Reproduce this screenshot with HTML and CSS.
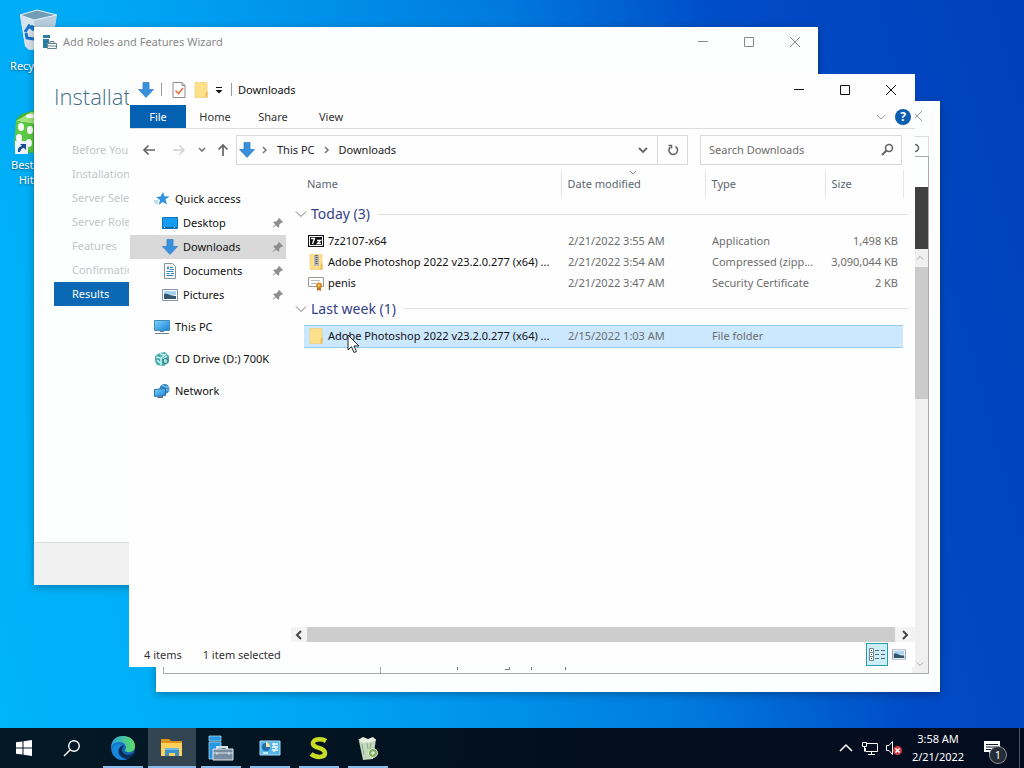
FILE: index.html
```html
<!DOCTYPE html>
<html lang="en">
<head>
<meta charset="UTF-8">
<meta name="viewport" content="width=device-width, initial-scale=1.0">
<title>Downloads</title>
<link rel="stylesheet" href="styles.css">
</head>
<body>

<!-- shared icons -->
<svg class="defs" aria-hidden="true">
    <defs>
        <linearGradient id="blue" x1="0" y1="0" x2="1" y2="1"><stop offset="0" stop-color="#7fd3fb"/><stop offset="1" stop-color="#1684d8"/></linearGradient>
        <linearGradient id="edgeTop" x1="0" y1="0" x2="1" y2="0"><stop offset="0" stop-color="#2ba7e0"/><stop offset="1" stop-color="#5fdc62"/></linearGradient>
        <linearGradient id="edgeBody" x1="0" y1="0" x2="1" y2="1"><stop offset="0" stop-color="#1687d9"/><stop offset="1" stop-color="#0d4fa0"/></linearGradient>
        <symbol id="down" viewBox="0 0 16 16"><path d="M5 0.500h6v7h4.500L8 15.500.500 7.500H5z" fill="#3990dc" stroke="#2b7ac6" stroke-width=".7"/></symbol>
        <symbol id="folder" viewBox="0 0 16 16"><path d="M2 .500h12v15H2z" fill="#ffe08a" stroke="#efcf76" stroke-width=".7"/><path d="M12.500 11l2-2v6.500h-2z" fill="#e8bd51"/></symbol>
        <symbol id="pin" viewBox="0 0 12 12"><path d="M7 1l4 4-1 1-.8-.3-2 2 .1 2-1 1L4 8.500 1 11l-.3-.3L3.300 7.500 1.300 5.500l1-1 2 .1 2-2L6 2z" fill="#8d8d8d"/></symbol>
        <symbol id="chev" viewBox="0 0 12 12"><path d="M1 3.500l5 5 5-5" fill="none" stroke="currentColor"/></symbol>
        <symbol id="min" viewBox="0 0 12 12"><path d="M1 5.500h10" stroke="currentColor"/></symbol>
        <symbol id="max" viewBox="0 0 12 12"><path d="M1.500 1.500h9v9h-9z" fill="none" stroke="currentColor"/></symbol>
        <symbol id="close" viewBox="0 0 12 12"><path d="M1 1l10 10M11 1L1 11" stroke="currentColor"/></symbol>
        <symbol id="lens" viewBox="0 0 13 13"><circle cx="8" cy="5" r="3.500" fill="none" stroke="#666" stroke-width="1.600"/><path d="M5.500 7.500L1 12" stroke="#666" stroke-width="2"/></symbol>
        <symbol id="picture" viewBox="0 0 16 12"><path d="M.500.500h15v11H.500z" fill="#fff" stroke="#8794a4"/><path d="M2 2h12v4H2z" fill="#a8d4f2"/><path d="M2 5c4-1 5 2 12 2v3H2z" fill="#32566f"/></symbol>
    </defs>
</svg>

<main class="desktop">
    <div class="shortcut bin">
        <svg width="44" height="44" viewBox="0 0 44 44"><path d="M3 7l17-5 20 5-5 32-23 3-4-4z" fill="#b9cfe0"/><path d="M3 7l17-5 20 5-23 5z" fill="#719eb7" stroke="#e6f0f6"/><path d="M3 7l14 5 2 29-7 1-4-4z" fill="#d8e4ed"/><path d="M8 24l4-6 5 4M17 31l-7-1-1-5M14 18l5 3" fill="none" stroke="#1573ca" stroke-width="3"/></svg>
        <span>Recycle Bin</span>
    </div>
    <div class="shortcut dice">
        <svg width="48" height="48" viewBox="0 0 48 48"><path d="M5 12Q6 8 11 5L24 1l23 7v35l-28 1-15-6z" fill="#43b332"/><path d="M5 12L20 3l24 4-20 8z" fill="#a3e77c"/><path d="M5 12l17 3v29L3 37z" fill="#5ac943"/><g fill="#fff"><ellipse cx="10" cy="18" rx="3" ry="4"/><ellipse cx="19" cy="21" rx="3" ry="4"/><ellipse cx="8" cy="29" rx="3" ry="4"/><ellipse cx="18" cy="34" rx="3" ry="4"/><ellipse cx="19" cy="7" rx="4" ry="2"/></g><path d="M4 32h13v13H4z" fill="#eef4fb"/><path d="M7 43q-1-5 4-6l-2-2h6v6l-2-2q-3 0-4 4z" fill="#174c91"/></svg>
        <span>Best<br>Hit</span>
    </div>

    <!-- server manager, behind -->
    <section class="window manager" aria-label="Server Manager">
        <header class="titlebar"><button aria-label="Close"><svg width="12" height="12"><use href="#close"/></svg></button></header>
        <div class="manager-box">
            <div class="manager-field"><svg width="13" height="13"><use href="#lens"/></svg></div>
            <div class="manager-page">
                <div class="manager-nav"></div>
                <div class="manager-main"><svg width="120" height="6" viewBox="0 0 120 6"><path d="M1.500 0v3M49 2.500h4.500V0M75.500 0v3M109.500 0v3" fill="none" stroke="#777"/></svg></div>
                <div class="vscroll">
                    <div class="dark"></div>
                    <button aria-label="Up"><svg class="flip" width="8" height="8"><use href="#chev"/></svg></button>
                    <div class="vthumb"></div>
                    <button class="last" aria-label="Down"><svg width="8" height="8"><use href="#chev"/></svg></button>
                </div>
            </div>
        </div>
    </section>

    <!-- wizard -->
    <section class="window wizard" aria-label="Add Roles and Features Wizard">
        <header class="titlebar">
            <svg width="16" height="16" viewBox="0 0 16 16"><path d="M1 1h7v3H1zM1 5h6v9H1z" fill="#2b7e9e"/><path d="M1 4.500h7" stroke="#fff"/><path d="M5 9h10v6H5z" fill="#fff"/><path d="M5.500 9.500h9v5h-9zM8 9V7.500h4V9M5 12h10" fill="none" stroke="#60818e"/></svg>
            <span class="title">Add Roles and Features Wizard</span>
            <button aria-label="Minimize"><svg width="12" height="12"><use href="#min"/></svg></button>
            <button aria-label="Maximize"><svg width="12" height="12"><use href="#max"/></svg></button>
            <button aria-label="Close"><svg width="12" height="12"><use href="#close"/></svg></button>
        </header>
        <h1>Installation progress</h1>
        <ol class="steps">
            <li>Before You Begin</li>
            <li>Installation Type</li>
            <li>Server Selection</li>
            <li>Server Roles</li>
            <li>Features</li>
            <li>Confirmation</li>
            <li class="current">Results</li>
        </ol>
        <footer></footer>
    </section>

    <!-- file explorer -->
    <section class="window explorer" aria-label="Downloads">
        <header class="titlebar">
            <svg width="16" height="16"><use href="#down"/></svg>
            <i class="bar"></i>
            <button class="quick" aria-label="Properties"><svg width="14" height="16" viewBox="0 0 14 16"><path d="M1 .500h9l3 3v12H1z" fill="#fff" stroke="#8a8a8a"/><path d="M10 .500v3h3" fill="none" stroke="#8a8a8a"/><path d="M3.500 8.500l3 3L11 6" fill="none" stroke="#e0714c" stroke-width="1.600"/></svg></button>
            <button class="quick" aria-label="New folder"><svg width="16" height="16"><use href="#folder"/></svg></button>
            <button class="quick small" aria-label="Customize toolbar"><svg width="8" height="8" viewBox="0 0 8 8"><path d="M1 1.500h6" stroke="#111"/><path d="M.500 4h7L4 7.500z" fill="#111"/></svg></button>
            <i class="bar"></i>
            <span class="title">Downloads</span>
            <button aria-label="Minimize"><svg width="12" height="12"><use href="#min"/></svg></button>
            <button aria-label="Maximize"><svg width="12" height="12"><use href="#max"/></svg></button>
            <button aria-label="Close"><svg width="12" height="12"><use href="#close"/></svg></button>
        </header>
        <nav class="ribbon">
            <button class="file">File</button>
            <button>Home</button>
            <button>Share</button>
            <button>View</button>
            <button class="expand" aria-label="Expand ribbon"><svg width="10" height="10"><use href="#chev"/></svg></button>
            <button class="help" aria-label="Help">?</button>
        </nav>
        <div class="addressbar">
            <button class="back" aria-label="Back"><svg width="14" height="14" viewBox="0 0 14 14"><path d="M13 7H2M6.500 2.500L2 7l4.500 4.500" fill="none" stroke="#666" stroke-width="1.700"/></svg></button>
            <button class="forward" aria-label="Forward"><svg width="14" height="14" viewBox="0 0 14 14"><path d="M1 7h11M7.500 2.500L12 7l-4.500 4.500" fill="none" stroke="#d2d2d2" stroke-width="1.500"/></svg></button>
            <button class="recent" aria-label="Recent"><svg width="8" height="8" viewBox="0 0 8 8"><path d="M1 2l3 3 3-3" fill="none" stroke="#777" stroke-width="1.600"/></svg></button>
            <button class="up" aria-label="Up"><svg width="14" height="14" viewBox="0 0 14 14"><path d="M7 13V2M2.500 6.500L7 2l4.500 4.500" fill="none" stroke="#666" stroke-width="1.700"/></svg></button>
            <div class="path">
                <svg width="16" height="16"><use href="#down"/></svg>
                <svg class="sep" width="8" height="8" viewBox="0 0 8 8"><path d="M2 1l3 3-3 3" fill="none" stroke="#777" stroke-width="1.500"/></svg>
                <a href="#pc">This PC</a>
                <svg class="sep" width="8" height="8" viewBox="0 0 8 8"><path d="M2 1l3 3-3 3" fill="none" stroke="#777" stroke-width="1.500"/></svg>
                <a href="#downloads">Downloads</a>
                <button class="history" aria-label="Previous locations"><svg width="10" height="10" viewBox="0 0 10 10"><path d="M1 3l4 4 4-4" fill="none" stroke="#666" stroke-width="1.800"/></svg></button>
                <button class="refresh" aria-label="Refresh"><svg width="12" height="12" viewBox="0 0 12 12"><path d="M8.500 2.500A4.300 4.300 0 1 1 3 3.300M1.500 1.500h3v3" fill="none" stroke="#666" stroke-width="1.600"/></svg></button>
            </div>
            <label class="search">
                <input type="search" placeholder="Search Downloads" aria-label="Search Downloads">
                <svg width="13" height="13"><use href="#lens"/></svg>
            </label>
        </div>

        <div class="content">
            <nav class="sidebar">
                <a href="#quick"><svg width="16" height="16" viewBox="0 0 16 16"><path d="M9 1l1.500 4.500 5-.2-4 3.200 1.500 5-4.300-2.500-4 3 1.300-5L2 6l4.500-.5z" fill="#2f92dc"/><path d="M0 10h4M1 12h3" stroke="#72b9e9"/></svg>Quick access</a>
                <a class="sub" href="#desktop"><svg width="16" height="16" viewBox="0 0 16 16"><path d="M.500 2.500h15v11H.500z" fill="#159cf0" stroke="#0872bd"/><path d="M1 12.500h14" stroke="#09629f"/><path d="M2 12.500h1M12 12.500h1" stroke="#fff"/></svg>Desktop<svg class="pin" width="12" height="12"><use href="#pin"/></svg></a>
                <a class="sub selected" href="#downloads"><svg width="16" height="16"><use href="#down"/></svg>Downloads<svg class="pin" width="12" height="12"><use href="#pin"/></svg></a>
                <a class="sub" href="#documents"><svg width="16" height="16" viewBox="0 0 16 16"><path d="M2.500.500h8l3 3v12h-11z" fill="#fff" stroke="#8492a0"/><path d="M5 6.500l1-3 1 3M8 4.500h3M8 6.500h4M4.500 8.500h7M4.500 10.500h3M9 10.500h3M4.500 12.500h7" fill="none" stroke="#3486bd"/></svg>Documents<svg class="pin" width="12" height="12"><use href="#pin"/></svg></a>
                <a class="sub" href="#pictures"><svg width="16" height="12"><use href="#picture"/></svg>Pictures<svg class="pin" width="12" height="12"><use href="#pin"/></svg></a>
                <a class="root" href="#pc"><svg width="16" height="16" viewBox="0 0 16 16"><path d="M.500 1.500h15v10H.500z" fill="url(#blue)" stroke="#438bb3"/><path d="M6 12h4v1H6zM1 14h14v1H1z" fill="#6b8494"/></svg>This PC</a>
                <a class="root" href="#cd"><svg width="16" height="16" viewBox="0 0 16 16"><path d="M1 5l5-3 5-1 4 4v6l-5 4-7-1-2-4z" fill="#45a9ad"/><path d="M2 6l5 1 5-4M7 7v7M3 9l3 3M6 3l5 1M9 8l4-3" fill="none" stroke="#c8f4ed" stroke-width="1.500"/><circle cx="11.500" cy="10" r="2.500" fill="#a8e1df" stroke="#24717b"/></svg>CD Drive (D:) 700K</a>
                <a class="root" href="#network"><svg width="16" height="16" viewBox="0 0 16 16"><circle cx="10.500" cy="6" r="5" fill="#3487cc"/><path d="M8 2q4 3 7 2M7 6q4 1 8 1" stroke="#9bd5f5" fill="none"/><path d="M.500 6.500l11-1v7l-11 1z" fill="url(#blue)" stroke="#2871a8"/><path d="M4 13.500l5-.500v2H3z" fill="#536d81"/></svg>Network</a>
            </nav>
            <div class="files">
                <table>
                    <colgroup><col class="c-gap"><col><col class="c-date"><col class="c-type"><col class="c-size"><col class="c-end"></colgroup>
                    <thead>
                        <tr><td></td><th>Name</th><th class="sorted">Date modified<svg width="8" height="6" viewBox="0 0 8 6"><path d="M1 1l3 3 3-3" fill="none" stroke="#888"/></svg></th><th>Type</th><th>Size</th><th></th></tr>
                    </thead>
                    <tbody>
                        <tr class="group"><th colspan="6"><div><svg width="12" height="12"><use href="#chev"/></svg><span>Today (3)</span><i></i></div></th></tr>
                        <tr>
                            <td></td>
                            <td><div class="name"><svg width="16" height="16" viewBox="0 0 16 16"><path d="M0 2h16v12H0z" fill="#111"/><path d="M1.500 3.500h13v9h-13z" fill="none" stroke="#fff"/><path d="M3 5.500h3.500L4.500 11M9 7.500h3.500L9.500 10.500H13" fill="none" stroke="#fff" stroke-width="1.400"/></svg><span>7z2107-x64</span></div></td>
                            <td>2/21/2022 3:55 AM</td><td>Application</td><td class="size">1,498 KB</td><td></td>
                        </tr>
                        <tr>
                            <td></td>
                            <td><div class="name"><svg width="16" height="16" viewBox="0 0 16 16"><use href="#folder"/><path d="M6 1h5v11H6z" fill="#b9b9b9"/><path d="M8.500 1v10" stroke="#555" stroke-width="2" stroke-dasharray="1 1"/></svg><span>Adobe Photoshop 2022 v23.2.0.277 (x64) ...</span></div></td>
                            <td>2/21/2022 3:54 AM</td><td>Compressed (zipp...</td><td class="size">3,090,044 KB</td><td></td>
                        </tr>
                        <tr>
                            <td></td>
                            <td><div class="name"><svg width="16" height="16" viewBox="0 0 16 16"><path d="M.500 2.500h15v9H.500z" fill="#fff" stroke="#a0968e"/><path d="M3 5.500h9M3 8.500h5" stroke="#bbb"/><path d="M9 11h4v5l-2-1-2 1z" fill="#ba6b27"/><circle cx="11" cy="10.500" r="3" fill="#d88b25"/><circle cx="11" cy="10.500" r="1" fill="#ffe092"/></svg><span>penis</span></div></td>
                            <td>2/21/2022 3:47 AM</td><td>Security Certificate</td><td class="size">2 KB</td><td></td>
                        </tr>
                        <tr class="group"><th colspan="6"><div><svg width="12" height="12"><use href="#chev"/></svg><span>Last week (1)</span><i></i></div></th></tr>
                        <tr class="selected">
                            <td></td>
                            <td><div class="name"><svg width="16" height="16"><use href="#folder"/></svg><span>Adobe Photoshop 2022 v23.2.0.277 (x64) ...</span></div></td>
                            <td>2/15/2022 1:03 AM</td><td>File folder</td><td class="size"></td><td></td>
                        </tr>
                    </tbody>
                </table>
                <div class="hscroll">
                    <button aria-label="Scroll left"><svg width="8" height="10" viewBox="0 0 8 10"><path d="M6 1L2 5l4 4" fill="none" stroke="#444" stroke-width="2"/></svg></button>
                    <div class="hthumb"></div>
                    <button aria-label="Scroll right"><svg width="8" height="10" viewBox="0 0 8 10"><path d="M2 1l4 4-4 4" fill="none" stroke="#444" stroke-width="2"/></svg></button>
                </div>
            </div>
        </div>
        <footer class="status">
            <span>4 items</span><span>1 item selected</span>
            <button class="view on" aria-label="Details"><svg width="18" height="16" viewBox="0 0 18 16"><path d="M1.500 1.500h4v4h-4zM1.500 5.500h4v4h-4zM1.500 9.500h4v4h-4z" fill="#fff" stroke="#718792"/><path d="M3 3.500h1M3 7.500h1M3 11.500h1" stroke="#345"/><path d="M7 3.500h4M13 3.500h4M7 7.500h4M13 7.500h4M7 11.500h4M13 11.500h4" stroke="#54707c"/></svg></button>
            <button class="view" aria-label="Large icons"><svg width="14" height="11" viewBox="0 0 16 12"><use href="#picture"/></svg></button>
        </footer>
    </section>

    <svg class="cursor" width="13" height="20" viewBox="0 0 13 20"><path d="M1 1v15l3.500-3.300L7 18.500l2.500-1L7 12h5z" fill="#fff" stroke="#222"/></svg>
</main>

<footer class="taskbar">
    <button class="task" aria-label="Start"><svg width="16" height="16" viewBox="0 0 16 16"><path d="M0 2.300l6.500-.9v6.100H0zM7.500 1.200L16 0v7.500H7.500zM0 8.500h6.500v6.100L0 13.700zM7.500 8.500H16V16l-8.500-1.200z" fill="#fff"/></svg></button>
    <button class="task" aria-label="Search"><svg width="18" height="18" viewBox="0 0 18 18"><circle cx="11" cy="7" r="5.300" fill="none" stroke="#fff" stroke-width="1.400"/><path d="M7 11l-6 6" stroke="#fff" stroke-width="1.500"/></svg></button>
    <div class="apps">
        <button class="task open" aria-label="Edge"><svg width="26" height="26" viewBox="0 0 26 26"><circle cx="13" cy="13" r="12" fill="url(#edgeBody)"/><path d="M1 12C2 4 7 1 13 1c7 0 12 4 12 10 0 5-4 7-8 6-3-1-2-2-1-4 0-4-3-6-7-6-4 0-7 2-8 5z" fill="url(#edgeTop)"/><path d="M10 12c-4 5 0 11 8 12 3-1 5-3 6-6-4 3-11 3-12-3 0-2 1-3 2-4-1-1-3-1-4 1z" fill="#0d2c55"/><path d="M10 12c-4 5-1 12 7 12-8 3-15-2-15-9 0-4 5-7 11-5-1 0-2 1-3 2z" fill="#1687d9"/></svg></button>
        <button class="task open active" aria-label="File Explorer"><svg width="24" height="24" viewBox="0 0 24 24"><path d="M1 3h8l2 2h11v4H1z" fill="#dd941c"/><path d="M1 7h21v13H1z" fill="#ffd15b"/><path d="M5 20v-8h14v8h-4v-3H9v3z" fill="#3b91cb"/><path d="M5 12h14v2H5z" fill="#6cb8e1"/></svg></button>
        <button class="task open" aria-label="Server Manager"><svg width="26" height="26" viewBox="0 0 26 26"><path d="M1 1h12v5H1zM1 7h12v17H1z" fill="#2397df" stroke="#bce3fa" stroke-width=".7"/><path d="M9 14v-2h10v2" stroke="#d8e1e8" stroke-width="2" fill="none"/><path d="M5 14h20v11H5z" fill="#778ca0" stroke="#e3e9ee"/><path d="M5 18h20M9 17v3M21 17v3" stroke="#dce4ec"/></svg></button>
        <button class="task open" aria-label="Control Panel"><svg width="22" height="18" viewBox="0 0 22 18"><path d="M1 2h20v14H1z" fill="#57b5e8" stroke="#a8dcf6"/><circle cx="7" cy="8" r="4" fill="#216fae"/><path d="M7 8V3a5 5 0 0 1 4 5z" fill="#f7e4a1"/><path d="M13 5h6M13 8h6M13 11h6M4 14h5M15 4v3M17 7v3M15 10v3" stroke="#e9f8ff" stroke-width="1.500"/></svg></button>
        <button class="task open" aria-label="Sublime"><svg width="22" height="24" viewBox="0 0 22 24"><path d="M18 5C13 2 4 3 5 8c1 5 12 3 12 9 0 5-9 5-14 1" fill="none" stroke="#c9dc25" stroke-width="4.500"/></svg></button>
        <button class="task open" aria-label="Uninstaller"><svg width="22" height="24" viewBox="0 0 22 24"><path d="M2 5l17-2-3 20-10 1z" fill="#c5d7bd"/><path d="M1 4l5-3 5 2 5-2 3 3-5 2-7 1z" fill="#e9f0df"/><path d="M5 8l2 11M10 7l1 6M14 7l-1 6" stroke="#8bab82" fill="none"/><circle cx="16" cy="17" r="4.500" fill="#7dae61" stroke="#dceccd"/><path d="M14 17h4M16 15v4" stroke="#fff"/></svg></button>
    </div>
    <div class="tray">
        <button aria-label="Show hidden icons"><svg width="14" height="10" viewBox="0 0 14 10"><path d="M1 8l6-6 6 6" fill="none" stroke="#fff" stroke-width="1.500"/></svg></button>
        <button aria-label="Network"><svg width="18" height="16" viewBox="0 0 18 16"><path d="M6 3.500h10.500v8H4.500V8M10.500 11.500v3M7 14.500h7M1.500 2.500h4v4h-4zM3.500 6.500v5" fill="none" stroke="#fff"/></svg></button>
        <button aria-label="Volume"><svg width="18" height="16" viewBox="0 0 18 16"><path d="M1.500 5.500h2.500l3.500-4v13l-3.500-4H1.500z" fill="none" stroke="#fff"/><circle cx="12.500" cy="10.500" r="4.500" fill="#d43b42"/><path d="M10.500 8.500l4 4M14.500 8.500l-4 4" stroke="#fff" stroke-width="1.500"/></svg></button>
        <button class="clock"><span>3:58 AM</span><span>2/21/2022</span></button>
        <button class="notes" aria-label="Notifications"><svg width="18" height="18" viewBox="0 0 18 18"><path d="M1 2h16v11h-8l-3 3v-3H1z" fill="#fff"/><path d="M3 5.500h12M3 8h12M3 10.500h9" stroke="#111b29"/></svg><span class="badge">1</span></button>
        <i class="peek"></i>
    </div>
</footer>

</body>
</html>
```
FILE: styles.css
```css
* {
    box-sizing: border-box;
}
body {
    margin: 0;
    height: 100vh;
    display: flex;
    flex-direction: column;
    overflow: hidden;
    font-family: "Noto Sans", "Open Sans", sans-serif;
    font-size: 11px;
    line-height: 16px;
    color: #222;
}
button, input {
    font: inherit;
    color: inherit;
    border: none;
    background: none;
    padding: 0;
    margin: 0;
}
button {
    display: flex;
    align-items: center;
    justify-content: center;
}
a {
    color: inherit;
    text-decoration: none;
}
svg {
    display: block;
    flex: none;
}
.defs {
    position: absolute;
    width: 0;
    height: 0;
}
.desktop {
    flex: 1;
    position: relative;
    background: linear-gradient(75deg, #00b5fa 0%, #00aaf5 22%, #0096ee 38%, #007cde 56%, #004cc6 75%, #0040ba 100%);
}
.shortcut {
    position: absolute;
    left: 0;
    width: 78px;
    display: flex;
    flex-direction: column;
    align-items: center;
    color: #fff;
    line-height: 15px;
    text-shadow: 0 1px 2px rgba(0, 0, 0, 0.5);
}
.bin {
    top: 8px;
    gap: 6px;
}
.dice {
    top: 109px;
    left: 11px;
    align-items: flex-start;
    text-align: right;
}

/* windows */
.window {
    position: absolute;
    display: flex;
    flex-direction: column;
    background: #fdfefe;
}
.titlebar {
    height: 30px;
    flex: none;
    display: flex;
    align-items: center;
    justify-content: flex-end;
}
.titlebar .title {
    flex: 1;
}
.titlebar button {
    width: 46px;
    height: 30px;
}

/* server manager */
.manager {
    inset: 101px 84px 36px 156px;
    box-shadow: 0 2px 8px rgba(0, 0, 0, 0.3);
}
.manager .titlebar {
    color: #999;
}
.manager-box {
    flex: 1;
    display: flex;
    flex-direction: column;
    padding: 5px 11px 18px 7px;
}
.manager-field {
    height: 20px;
    display: flex;
    align-items: flex-end;
    justify-content: flex-end;
    padding: 0 8px 0 0;
    border: 1px solid #ddd;
    border-bottom: none;
}
.manager-page {
    flex: 1;
    display: flex;
    border: 1px solid #aaa;
}
.manager-nav {
    width: 217px;
    border-right: 1px solid #aaa;
}
.manager-main {
    flex: 1;
    display: flex;
    align-items: flex-end;
    padding-left: 75px;
}
.vscroll {
    width: 16px;
    display: flex;
    flex-direction: column;
    background: #f0f0f0;
}
.vscroll button {
    height: 18px;
    color: #888;
}
.vscroll .last {
    margin-top: auto;
}
.dark {
    height: 92px;
    border-top: 30px solid #fdfefe;
    background: #404040;
}
.vthumb {
    height: 132px;
    background: #cbcbcb;
}
.flip {
    transform: rotate(180deg);
}

/* wizard */
.wizard {
    inset: 27px 206px 143px 34px;
    box-shadow: 0 2px 8px rgba(0, 0, 0, 0.3);
}
.wizard .titlebar {
    padding-left: 8px;
    color: #8a8a8a;
}
.wizard .title {
    padding-left: 5px;
}
.wizard h1 {
    width: 75px;
    overflow: hidden;
    white-space: nowrap;
    margin: 23px 20px 0;
    font-family: "Open Sans", "Noto Sans", sans-serif;
    font-weight: 300;
    font-size: 22px;
    line-height: 32px;
    color: #42708a;
}
.steps {
    list-style: none;
    margin: 26px 20px 0;
    padding: 0;
    width: 75px;
    overflow: hidden;
    white-space: nowrap;
    color: #c4c6c8;
}
.steps li {
    line-height: 24px;
    padding-left: 18px;
}
.steps .current {
    background: #0a68b4;
    color: #fff;
}
.wizard footer {
    margin-top: auto;
    height: 43px;
    background: #f0f0f0;
    border-top: 1px solid #dcdcdc;
}

/* explorer */
.explorer {
    inset: 74px 109px 61px 129px;
    padding-left: 1px;
    background: #fefefe;
    overflow: hidden;
}
.explorer .titlebar {
    height: 31px;
    padding: 0 1px 0 8px;
    color: #111;
}
.explorer .bar {
    width: 1px;
    height: 13px;
    margin: 0 6px 0 7px;
    background: #999;
}
.explorer .quick {
    width: 22px;
}
.explorer .small {
    width: 14px;
}
.small + .bar {
    margin-left: 5px;
}
.ribbon {
    height: 24px;
    flex: none;
    display: flex;
    border-bottom: 1px solid #ddd;
    color: #333;
}
.ribbon button {
    width: 58px;
}
.ribbon .file {
    width: 56px;
    background: #0460b0;
    color: #fff;
}
.ribbon .expand {
    width: 16px;
    margin-left: auto;
    color: #888;
}
.ribbon .help {
    width: 16px;
    height: 16px;
    margin: 4px 4px 0 6px;
    border-radius: 50%;
    background: #0a5fb0;
    color: #fff;
    font-size: 12px;
    font-weight: bold;
}
.addressbar {
    flex: none;
    height: 41px;
    display: flex;
    align-items: center;
    padding: 0 13px 0 12px;
}
.back {
    width: 14px;
}
.forward {
    width: 14px;
    margin-left: 16px;
}
.recent {
    width: 8px;
    margin-left: 12px;
}
.up {
    width: 14px;
    margin-left: 10px;
}
.path {
    flex: 1;
    height: 30px;
    margin-left: 6px;
    padding-left: 2px;
    display: flex;
    align-items: center;
    border: 1px solid #d9d9d9;
}
.path .sep {
    margin: 0 8px 0 6px;
}
.path a + .sep {
    margin-left: 8px;
}
.history {
    margin-left: auto;
    width: 28px;
    height: 28px;
}
.refresh {
    width: 30px;
    height: 28px;
    border-left: 1px solid #d9d9d9;
}
.search {
    width: 202px;
    height: 30px;
    margin-left: 12px;
    padding: 0 7px 0 8px;
    display: flex;
    align-items: center;
    border: 1px solid #d9d9d9;
}
.search input {
    flex: 1;
    min-width: 0;
    outline: none;
    appearance: none;
}
.search input::placeholder {
    color: #6d6d6d;
    opacity: 1;
}
.content {
    flex: 1;
    min-height: 0;
    display: flex;
}
.sidebar {
    width: 156px;
    padding-top: 17px;
    color: #111;
}
.sidebar a {
    height: 24px;
    padding-left: 24px;
    display: flex;
    align-items: center;
    gap: 5px;
    white-space: nowrap;
}
.sidebar .sub {
    padding-left: 32px;
}
.sidebar .root {
    margin-top: 8px;
}
.sidebar .selected {
    background: #d9d9d9;
}
.sidebar .pin {
    margin-left: auto;
    margin-right: 2px;
}
.files {
    flex: 1;
    min-width: 0;
    display: flex;
    flex-direction: column;
    padding-left: 5px;
}
table {
    width: calc(100% - 10px);
    margin-left: 3px;
    table-layout: fixed;
    border-collapse: collapse;
}
.c-gap {
    width: 10px;
}
.c-date {
    width: 144px;
}
.c-type {
    width: 120px;
}
.c-size {
    width: 78px;
}
.c-end {
    width: 5px;
}
th, td {
    padding: 0;
    text-align: left;
    font-weight: normal;
    white-space: nowrap;
}
thead tr {
    height: 28px;
    color: #5c6670;
}
thead th {
    position: relative;
    padding-left: 6px;
    border-left: 1px solid #e5e5e5;
}
thead td + th {
    border-left: none;
    padding-left: 3px;
}
thead th:last-child {
    padding: 0;
}
.sorted svg {
    position: absolute;
    top: 0;
    left: calc(50% - 4px);
}
tbody tr {
    height: 21px;
    color: #6d6d6d;
}
tbody td {
    padding-left: 7px;
}
tbody td:nth-child(2) {
    padding-left: 4px;
}
tbody td:first-child, tbody td:last-child {
    padding: 0;
}
tbody .size {
    padding: 0 5px 0 0;
    text-align: right;
}
.name {
    display: flex;
    align-items: center;
    gap: 4px;
    color: #111;
}
.group {
    height: 32px;
}
.group div {
    display: flex;
    align-items: center;
    gap: 4px;
    font-size: 14px;
    line-height: 20px;
    color: #34408a;
}
.group svg {
    color: #777;
    margin-left: 1px;
}
.group i {
    flex: 1;
    height: 1px;
    margin-left: 4px;
    background: #e2e2e2;
}
.selected td:not(:first-child):not(:last-child) {
    height: 22px;
    background: #cce8ff;
    border-top: 1px solid #99cdf0;
    border-bottom: 1px solid #99cdf0;
}
.hscroll {
    margin-top: auto;
    height: 15px;
    display: flex;
    background: #f3f3f3;
}
.hscroll button {
    width: 16px;
}
.hscroll button:last-child {
    width: 20px;
}
.hthumb {
    flex: 1;
    background: #cdcdcd;
}
.status {
    height: 25px;
    flex: none;
    display: flex;
    align-items: center;
    padding: 0 9px 0 14px;
    gap: 21px;
    color: #333;
}
.view {
    width: 14px;
    height: 23px;
    margin-left: -17px;
}
.view.on {
    width: 22px;
    margin-left: auto;
    background: #cdeef8;
    border: 1px solid #279eb0;
}
.cursor {
    position: absolute;
    left: 347px;
    top: 334px;
}

/* taskbar */
.taskbar {
    height: 40px;
    flex: none;
    display: flex;
    background: linear-gradient(90deg, #031a26, #03101f 50%, #040c20);
    color: #fff;
}
.task {
    width: 48px;
    height: 40px;
    position: relative;
}
.apps {
    display: flex;
    gap: 1px;
    margin-left: 3px;
}
.task.open::after {
    content: "";
    position: absolute;
    left: 4px;
    right: 4px;
    bottom: 0;
    height: 2px;
    background: #86bdec;
}
.task.active {
    background: #334551;
}
.task.active::after {
    left: 0;
    right: 0;
}
.tray {
    margin-left: auto;
    display: flex;
    align-items: center;
}
.tray button {
    width: 24px;
    height: 40px;
}
.tray .clock {
    width: 64px;
    flex-direction: column;
    line-height: 18px;
}
.tray .notes {
    width: 44px;
    margin-right: 5px;
    position: relative;
}
.badge {
    position: absolute;
    left: 19px;
    top: 18px;
    width: 18px;
    height: 18px;
    border: 1px solid #8a929b;
    border-radius: 50%;
    background: #252c36;
    line-height: 16px;
}
.peek {
    width: 5px;
    height: 40px;
    border-left: 1px solid #4a5260;
}
```
